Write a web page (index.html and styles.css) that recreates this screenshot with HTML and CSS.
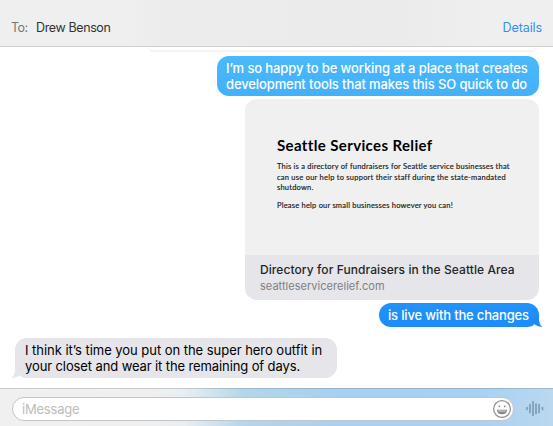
FILE: index.html
```html
<!DOCTYPE html>
<html lang="en">
<head>
<meta charset="utf-8">
<title>Messages</title>
<link rel="stylesheet" href="styles.css">
</head>
<body>
<main class="window">
  <header class="header">
    <span class="to">To:</span>
    <span class="recipient">Drew Benson</span>
    <a class="details">Details</a>
  </header>
  <section class="thread">
    <div class="previous"></div>
    <div class="bubble sent first">
      <span class="line l1">I’m so happy to be working at a place that creates</span>
      <span class="line l2">development tools that makes this SO quick to do</span>
    </div>
    <article class="card">
      <div class="preview">
        <h1>Seattle Services Relief</h1>
        <p>This is a directory of fundraisers for Seattle service businesses that<br><span class="p2">can use our help to support their staff during the state-mandated</span><br>shutdown.</p>
        <p>Please help our small businesses however you can!</p>
      </div>
      <div class="caption">
        <div class="caption-title">Directory for Fundraisers in the Seattle Area</div>
        <div class="caption-url">seattleservicerelief.com</div>
      </div>
    </article>
    <div class="bubble sent last">
      <span class="line l3">is live with the changes</span>
      <svg class="tail right" width="12" height="12" viewBox="0 0 12 12"><path d="M8 0V5Q8.500 10 11.500 11.700Q7.500 12.200 4.500 10L0 5Z" fill="#1c8cfb"/></svg>
    </div>
    <div class="bubble received">
      <svg class="tail left" width="12" height="12" viewBox="0 0 12 12"><path d="M4 0V5Q3.500 10 .5 11.700Q4.500 12.200 7.500 10L12 5Z" fill="#e5e5ea"/></svg>
      <span class="line l4">I think it’s time you put on the super hero outfit in</span>
      <span class="line l5">your closet and wear it the remaining of days.</span>
    </div>
  </section>
  <footer class="composer">
    <div class="field">
      <span class="placeholder">iMessage</span>
      <svg class="smiley" width="20" height="20" viewBox="0 0 20 20">
        <circle cx="10" cy="10" r="8.400" fill="#fff" stroke="#929292" stroke-width="1.300"/>
        <circle cx="7.300" cy="7.300" r=".9" fill="#858585"/>
        <circle cx="12.700" cy="7.300" r=".9" fill="#858585"/>
        <path d="M4.800 10.700H15.200Q14.600 15.300 10 15.300T4.800 10.700Z" fill="#858585"/>
        <path d="M5.900 11.500H14.100L13.700 12.600H6.300Z" fill="#ddd"/>
      </svg>
    </div>
    <svg class="wave" width="18" height="16" viewBox="0 0 18 16">
      <path d="M1 6.500V8.500M4 3.500V11.500M7 .8V14.200M10 3V12.500M13 3.500V11.500M16.500 6.500V8.500" stroke="#7d9db5" stroke-width="1.700" stroke-linecap="round"/>
    </svg>
  </footer>
</main>
</body>
</html>
```
FILE: styles.css
```css
* { box-sizing: border-box; }
body {
  margin: 0;
  background: #fff;
  font-family: Inter, "Liberation Sans", sans-serif;
  font-size: 13px;
  color: #000;
}
.window {
  display: flex;
  flex-direction: column;
  width: 553px;
  height: 426px;
  overflow: hidden;
}
.header {
  display: flex;
  align-items: center;
  height: 47px;
  padding: 8px 11px 0;
  border-bottom: 1px solid #cfcfcf;
  background: linear-gradient(90deg, #efefef 0, #efefef 125px, #ececec 170px, #ebebeb 400px, #efefef 490px);
}
.to { width: 25px; color: #777; font-size: 12.5px; letter-spacing: -0.5px; }
.recipient { color: #333; font-size: 12.5px; letter-spacing: -0.38px; }
.details { margin-left: auto; color: #3390f8; font-size: 12.5px; letter-spacing: -0.1px; }
.thread {
  display: flex;
  flex-direction: column;
  flex: 1;
  padding: 0 14px 0 15px;
}
.previous {
  align-self: flex-end;
  width: 387px;
  height: 5px;
  margin: 0 3px 4px 0;
  border: solid #f4f4f4;
  border-width: 0 1px 2px;
  border-radius: 0 0 4px 4px;
  flex: none;
}
.bubble {
  position: relative;
  flex: none;
  width: 322px;
  height: 40px;
  padding: 4px 9px;
  border-radius: 12px;
  line-height: 16px;
}
.line { display: block; white-space: nowrap; }
.sent { align-self: flex-end; color: #fff; font-weight: 500; }
.first { background: linear-gradient(#4bb9fa, #43b0fa); }
.last { width: 160px; height: 24px; margin-top: 3px; background: linear-gradient(#2292fb, #1c8cfb); }
.received { margin-top: 11px; padding-left: 10px; background: #e5e5ea; }
.tail { position: absolute; bottom: 0; }
.right { right: -4px; }
.left { left: -4px; }
.l1 { letter-spacing: -0.12px; }
.l2 { letter-spacing: -0.11px; }
.l3 { letter-spacing: -0.17px; }
.l4 { letter-spacing: -0.04px; }
.l5 { letter-spacing: -0.11px; }
.card {
  align-self: flex-end;
  flex: none;
  width: 294px;
  height: 201px;
  margin-top: 3px;
  border-radius: 12px;
  overflow: hidden;
}
.preview {
  height: 156px;
  padding: 36px 0 0 32px;
  background: #f0f0f0;
  font-family: Lato, sans-serif;
  font-size: 7.5px;
  line-height: 10.6px;
  letter-spacing: 0.21px;
  white-space: nowrap;
}
h1 { margin: 0 0 7px; font-size: 15px; line-height: 20px; font-weight: 700; letter-spacing: 0.37px; }
p { margin: 0 0 7px; color: #181818; -webkit-text-stroke: 0.15px #181818; }
.p2 { letter-spacing: 0.24px; }
.caption { height: 45px; padding: 7px 15px 0; background: #e5e5ea; white-space: nowrap; }
.caption-title { color: #252527; font-size: 12px; line-height: 16px; font-weight: 500; letter-spacing: 0.08px; }
.caption-url { color: #808084; font-size: 11px; line-height: 17px; letter-spacing: 0.03px; }
.composer {
  display: flex;
  align-items: center;
  gap: 12px;
  height: 38px;
  padding: 3px 9px 0 12px;
  border-top: 1px solid rgba(90, 90, 90, .25);
  background: linear-gradient(90deg, #f0f0f0 0, #efefef 145px, #e8eef2 185px, #b4d5eb 245px, #a8d0f0 340px, #a8d1f2 480px, #bad8ef 553px);
}
.field {
  display: flex;
  align-items: center;
  justify-content: space-between;
  width: 502px;
  height: 24px;
  padding: 0 1px 0 9px;
  border: 1px solid #c3c6c8;
  border-radius: 12px;
  background: #fff;
}
.placeholder { color: #bdbdbd; letter-spacing: -0.2px; }
```
